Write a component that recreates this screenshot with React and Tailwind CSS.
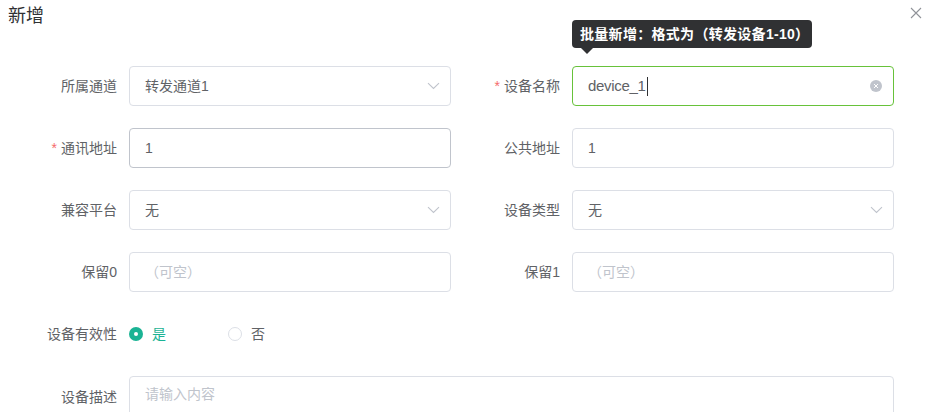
import React from 'react';

const font = { fontFamily: '"Liberation Sans", "Noto Sans CJK SC", sans-serif' };

function Chevron() {
  return (
    <svg width="13" height="8" viewBox="0 0 13 8" className="shrink-0">
      <path d="M1 1.2 L6.5 6.5 L12 1.2" fill="none" stroke="#c0c4cc" strokeWidth="1.1" />
    </svg>
  );
}

function Label({ children, required }) {
  return (
    <div className="w-[112px] shrink-0 pr-3 flex items-center justify-end text-sm text-[#606266]">
      {required && <span className="text-[#f56c6c] mr-1">*</span>}
      {children}
    </div>
  );
}

function Field({ label, required, children }) {
  return (
    <div className="flex h-10">
      <Label required={required}>{label}</Label>
      {children}
    </div>
  );
}

function Box({ children, border = 'border-[#dcdfe6]', select }) {
  return (
    <div className={`w-[322px] h-10 rounded border ${border} flex items-center justify-between pl-[15px] pr-[10px] text-sm text-[#606266]`}>
      <span>{children}</span>
      {select && <Chevron />}
    </div>
  );
}

export default function App() {
  return (
    <div className="relative w-[929px] h-[412px] bg-white overflow-hidden" style={font}>
      <div className="flex items-start justify-between pl-2 pr-[7px] pt-[4px] h-[66px]">
        <h2 className="text-[18px] leading-6 text-[#303133]">新增</h2>
        <svg width="12" height="12" viewBox="0 0 12 12" className="mt-[3px]">
          <path d="M1 1 L11 11 M11 1 L1 11" stroke="#909399" strokeWidth="1.1" />
        </svg>
      </div>

      <div className="pl-[17px] flex flex-col gap-[22px]">
        <div className="grid grid-cols-[434px_434px] gap-x-[9px] gap-y-[22px]">
          <Field label="所属通道">
            <Box select>转发通道1</Box>
          </Field>
          <Field label="设备名称" required>
            <div className="relative">
              <div className="absolute left-0 bottom-[52px] whitespace-nowrap">
                <div className="w-[240px] bg-[#303133] text-white text-sm font-bold rounded pl-2 h-7 flex items-center tracking-[0.3px]">
                  批量新增：格式为（转发设备1-10）
                </div>
                <div className="ml-[9px] w-0 h-0 border-x-[6px] border-x-transparent border-t-[6px] border-t-[#303133]" />
              </div>
              <div className="w-[322px] h-10 rounded border border-[#67c23a] flex items-center justify-between pl-[15px] pr-[11px] text-[15px] tracking-[-0.3px] text-[#606266]">
                <span className="flex items-center">
                  device_1
                  <span className="inline-block w-px h-[19px] bg-[#303133] ml-px" />
                </span>
                <span className="w-3 h-3 rounded-full bg-[#c0c4cc] flex items-center justify-center">
                  <svg width="6" height="6" viewBox="0 0 6 6">
                    <path d="M1 1 L5 5 M5 1 L1 5" stroke="#fff" strokeWidth="1" />
                  </svg>
                </span>
              </div>
            </div>
          </Field>

          <Field label="通讯地址" required>
            <Box border="border-[#c0c4cc]">1</Box>
          </Field>
          <Field label="公共地址">
            <Box>1</Box>
          </Field>

          <Field label="兼容平台">
            <Box select>无</Box>
          </Field>
          <Field label="设备类型">
            <Box select>无</Box>
          </Field>

          <Field label="保留0">
            <Box><span className="text-[#c0c4cc]">（可空）</span></Box>
          </Field>
          <Field label="保留1">
            <Box><span className="text-[#c0c4cc]">（可空）</span></Box>
          </Field>
        </div>

        <Field label="设备有效性">
          <div className="flex items-center text-sm">
            <span className="w-[14px] h-[14px] rounded-full bg-[#1ab394] flex items-center justify-center">
              <span className="w-1 h-1 rounded-full bg-white" />
            </span>
            <span className="ml-[9px] text-[#1ab394]">是</span>
            <span className="ml-[62px] w-[14px] h-[14px] rounded-full border border-[#dcdfe6]" />
            <span className="ml-[9px] text-[#606266]">否</span>
          </div>
        </Field>

        <div className="flex">
          <div className="w-[112px] shrink-0 pr-3 pt-[11px] text-right text-sm text-[#606266]">设备描述</div>
          <div className="w-[765px] h-[60px] rounded border border-[#dcdfe6] px-[15px] pt-[7px] text-sm text-[#c0c4cc]">
            请输入内容
          </div>
        </div>
      </div>
    </div>
  );
}
